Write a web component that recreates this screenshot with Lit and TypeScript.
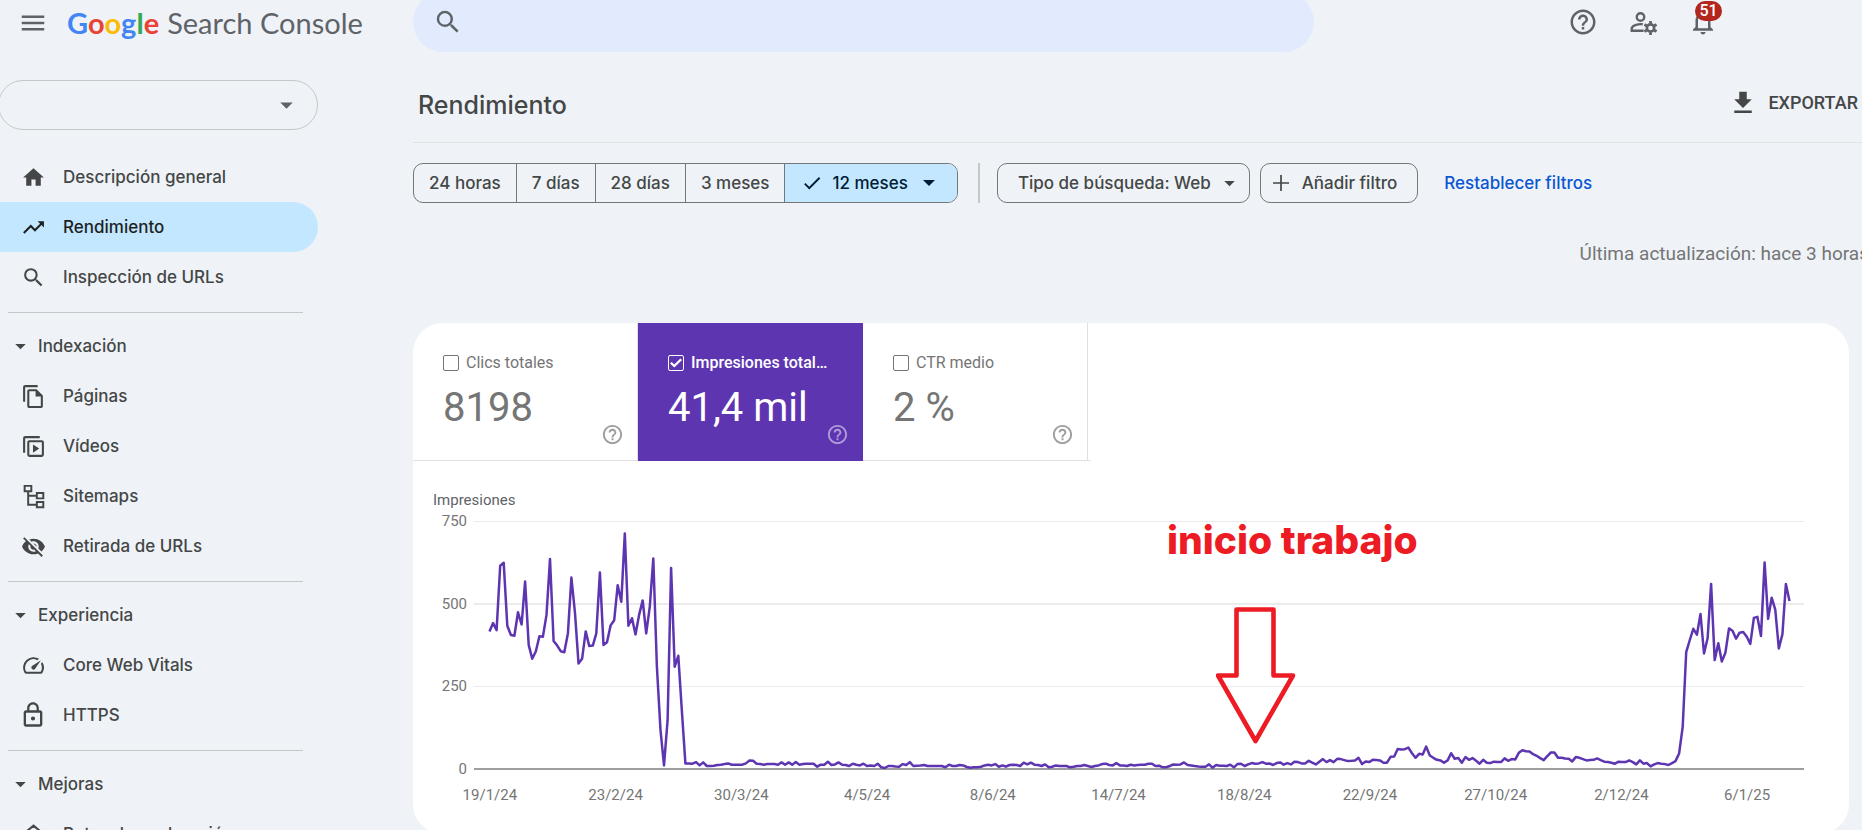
import { LitElement, html, svg, css, nothing } from "lit";
import { customElement, property, state } from "lit/decorators.js";
import { classMap } from "lit/directives/class-map.js";

const ICONS: Record<string, unknown> = {
  menu: svg`<path d="M3 18h18v-2H3v2zm0-5h18v-2H3v2zm0-7v2h18V6H3z"/>`,
  search: svg`<path d="M15.5 14h-.79l-.28-.27A6.471 6.471 0 0 0 16 9.5 6.5 6.5 0 1 0 9.5 16c1.61 0 3.09-.59 4.23-1.57l.27.28v.79l5 4.99L20.49 19l-4.99-5zm-6 0C7.01 14 5 11.99 5 9.5S7.01 5 9.5 5 14 7.01 14 9.5 11.99 14 9.5 14z"/>`,
  home: svg`<path d="M10 20v-6h4v6h5v-8h3L12 3 2 12h3v8z"/>`,
  trend: svg`<path d="M16 6l2.29 2.29-4.88 4.88-4-4L2 16.59 3.41 18l6-6 4 4 6.3-6.29L22 12V6z"/>`,
  pages: svg`<path d="M16 1H4c-1.1 0-2 .9-2 2v14h2V3h12V1zm-1 4H8c-1.1 0-1.99.9-1.99 2L6 21c0 1.1.89 2 1.99 2H19c1.1 0 2-.9 2-2V11l-6-6zM8 21V7h6v5h5v9H8z"/>`,
  videos: svg`<path d="M2 18V4a2 2 0 0 1 2-2h14v2H4v14z"/><path fill-rule="evenodd" d="M8 6h12a2 2 0 0 1 2 2v12a2 2 0 0 1-2 2H8a2 2 0 0 1-2-2V8a2 2 0 0 1 2-2zm0 2v12h12V8zM11.5 10v8l6-4z"/>`,
  sitemap: svg`<g fill="none" stroke="currentColor" stroke-width="1.9"><path d="M3.500 1.800h6.400v5.200H3.500zM15.200 8.600h6.200v5.200h-6.200zM15.200 17.200h6.200v5.200h-6.200zM6.900 7v13h8.300M6.900 11.200h8.300"/></g>`,
  hidden: svg`<path d="M12 7c2.760 0 5 2.240 5 5 0 .65-.13 1.260-.36 1.830l2.920 2.920c1.510-1.260 2.700-2.890 3.430-4.750-1.730-4.390-6-7.500-11-7.500-1.400 0-2.740.25-3.980.7l2.160 2.160C10.740 7.130 11.350 7 12 7zM2 4.270l2.280 2.280.46.46C3.080 8.300 1.780 10.020 1 12c1.730 4.390 6 7.500 11 7.500 1.550 0 3.030-.3 4.380-.84l.42.42L19.730 22 21 20.730 3.270 3 2 4.270zM7.530 9.800l1.550 1.550c-.05.21-.08.43-.08.65 0 1.660 1.340 3 3 3 .22 0 .44-.03.65-.08l1.550 1.550c-.67.33-1.410.53-2.200.53-2.760 0-5-2.240-5-5 0-.79.2-1.530.53-2.200zm4.310-.78l3.150 3.150.02-.16c0-1.660-1.340-3-3-3l-.17.01z"/>`,
  speed: svg`<path d="M20.380 8.570l-1.230 1.850a8 8 0 0 1-.22 7.580H5.070A8 8 0 0 1 15.580 6.850l1.850-1.230A10 10 0 0 0 3.350 19a2 2 0 0 0 1.720 1h13.850a2 2 0 0 0 1.740-1 10 10 0 0 0-.27-10.440zm-9.790 6.840a2 2 0 0 0 2.830 0l5.660-8.490-8.490 5.660a2 2 0 0 0 0 2.830z"/>`,
  lock: svg`<path d="M12 16.800a1.800 1.800 0 1 0 0-3.600 1.800 1.800 0 0 0 0 3.600zm6-8.800h-1V6c0-2.760-2.240-5-5-5S7 3.240 7 6v2H6c-1.100 0-2 .9-2 2v10c0 1.100.9 2 2 2h12c1.100 0 2-.9 2-2V10c0-1.100-.9-2-2-2zM8.900 6c0-1.710 1.390-3.100 3.100-3.100s3.100 1.390 3.100 3.100v2H8.900V6zM18 20H6V10h12v10z"/>`,
  trail: svg`<path fill="none" stroke="currentColor" stroke-width="2" d="M12 3.500l9 7.500-9 7.500-9-7.500z"/>`,
  help: svg`<path d="M11 18h2v-2h-2v2zm1-16C6.480 2 2 6.480 2 12s4.480 10 10 10 10-4.480 10-10S17.520 2 12 2zm0 18c-4.410 0-8-3.590-8-8s3.590-8 8-8 8 3.590 8 8-3.590 8-8 8zm0-14c-2.210 0-4 1.790-4 4h2c0-1.100.9-2 2-2s2 .9 2 2c0 2-3 1.750-3 5h2c0-2.250 3-2.500 3-5 0-2.210-1.790-4-4-4z"/>`,
  accounts: svg`<g fill="none" stroke="currentColor" stroke-width="1.900"><circle cx="10" cy="8" r="3"/><path d="M11.800 13.800c-3.400-.5-7.900.6-8.800 3V19h9.500"/><circle cx="18" cy="16.800" r="2.900" stroke-width="2.100"/><path stroke-width="2.200" d="M18 11.200v2M18 20.400v2M13.150 14l1.730 1M21.120 18.600l1.730 1M13.150 19.600l1.730-1M21.120 15l1.730-1"/></g>`,
  bell: svg`<path d="M12 22c1.100 0 2-.9 2-2h-4c0 1.100.9 2 2 2zm6-6v-5c0-3.070-1.630-5.640-4.500-6.320V4c0-.83-.67-1.500-1.500-1.500s-1.500.67-1.500 1.500v.68C7.640 5.360 6 7.920 6 11v5l-2 2v1h16v-1l-2-2zm-2 1H8v-6c0-2.480 1.510-4.500 4-4.500s4 2.020 4 4.500v6z"/>`,
  download: svg`<path d="M5 20h14v-2H5v2zM19 9h-4V3H9v6H5l7 7 7-7z"/>`,
  down: svg`<path d="M6 9l6 6 6-6z"/>`,
  check: svg`<path d="M9 16.170L4.830 12l-1.420 1.410L9 19 21 7l-1.410-1.410z"/>`,
  plus: svg`<path d="M20 12.850h-7.150V20h-1.700v-7.150H4v-1.700h7.150V4h1.700v7.150H20z"/>`,
};

const icon = (name: string, size: number) =>
  html`<svg class="icon" width=${size} height=${size} viewBox="0 0 24 24" fill="currentColor" aria-hidden="true">${ICONS[name]}</svg>`;

const base = css`
  * { box-sizing: border-box; }
  .icon { display: block; flex: none; }
  button, select, input { font: inherit; color: inherit; background: none; border: 0; margin: 0; padding: 0; }
  button { cursor: pointer; }
  a { color: inherit; text-decoration: none; }
`;

/* Daily impressions, 19/1/24 to 18/1/25. */
const IMPRESSIONS = [
  417, 442, 421, 616, 625, 434, 406, 404, 475, 438, 568, 376, 334, 356, 402, 401, 467, 636, 388, 374,
  357, 354, 411, 580, 472, 320, 334, 417, 373, 374, 411, 595, 376, 384, 435, 451, 557, 507, 714, 434,
  457, 408, 467, 511, 411, 492, 638, 310, 118, 11, 148, 609, 310, 343, 179, 17, 17, 16, 21, 11,
  20, 9, 9, 10, 12, 13, 15, 17, 13, 13, 13, 13, 17, 26, 25, 16, 15, 13, 15, 15,
  15, 13, 20, 13, 20, 13, 21, 13, 15, 16, 16, 16, 7, 13, 13, 22, 12, 14, 20, 13,
  12, 9, 16, 13, 11, 16, 9, 11, 9, 16, 5, 3, 9, 9, 8, 7, 15, 12, 21, 9,
  10, 11, 12, 9, 9, 9, 9, 9, 5, 13, 9, 9, 12, 11, 6, 4, 5, 5, 7, 11,
  13, 11, 15, 7, 11, 7, 12, 13, 12, 9, 19, 14, 19, 13, 12, 9, 14, 5, 7, 11,
  9, 9, 9, 5, 7, 9, 9, 12, 9, 6, 9, 11, 15, 16, 12, 11, 18, 11, 11, 9,
  13, 11, 12, 13, 13, 16, 16, 9, 10, 5, 5, 9, 14, 13, 14, 20, 12, 11, 9, 8,
  7, 7, 14, 4, 12, 10, 10, 9, 13, 5, 15, 16, 9, 14, 18, 16, 17, 21, 16, 17,
  12, 18, 20, 13, 18, 14, 22, 21, 17, 17, 25, 19, 14, 22, 30, 21, 27, 21, 31, 30,
  27, 24, 25, 26, 34, 15, 23, 21, 28, 27, 26, 19, 19, 37, 38, 61, 59, 60, 65, 48,
  34, 46, 44, 68, 41, 34, 28, 26, 19, 26, 48, 31, 33, 19, 36, 28, 33, 25, 16, 28,
  19, 18, 22, 21, 21, 32, 25, 30, 29, 49, 57, 54, 53, 45, 40, 33, 27, 39, 50, 50,
  34, 34, 32, 31, 23, 36, 34, 30, 26, 27, 28, 32, 27, 22, 21, 19, 16, 22, 21, 21,
  26, 21, 14, 26, 16, 18, 8, 14, 18, 16, 15, 12, 18, 24, 47, 128, 354, 391, 425, 407,
  470, 350, 396, 561, 330, 381, 326, 352, 426, 419, 395, 413, 415, 401, 379, 458, 461, 403, 626, 455,
  519, 482, 365, 408, 561, 509,
];

const DATES = ["19/1/24", "23/2/24", "30/3/24", "4/5/24", "8/6/24", "14/7/24", "18/8/24", "22/9/24", "27/10/24", "2/12/24", "6/1/25"];

@customElement("gsc-header")
class GscHeader extends LitElement {
  static styles = [base, css`
    :host { display: grid; grid-template-columns: 413px minmax(0, 1fr); height: 60px; color: #5f6368; }
    .brand { display: flex; align-items: center; padding: 0 0 14px 18px; }
    .logo { display: flex; align-items: baseline; gap: 8px; margin-left: 19px; white-space: nowrap; }
    .google { font: 700 29px/40px "Lato", sans-serif; }
    .product { font: 400 29px/40px "Lato", sans-serif; }
    .b { color: #4285f4; } .r { color: #ea4335; } .y { color: #fbbc04; } .g { color: #34a853; }
    .bar { display: flex; justify-content: space-between; align-items: flex-start; padding-right: 144px; }
    .search { display: flex; align-items: center; width: 901px; height: 60px; margin-top: -8px; padding: 0 20px; border-radius: 30px; background: #e2ebfd; }
    .search input { flex: 1; min-width: 0; margin-left: 12px; outline: none; font: 400 18px "Roboto", sans-serif; }
    .actions { display: flex; gap: 30px; padding-top: 7px; }
    .bell { position: relative; }
    .badge { position: absolute; left: 7px; top: -6px; width: 27px; height: 20px; border-radius: 10px; background: #b3261e; color: #fff; font: 500 16px/20px "Roboto", sans-serif; text-align: center; }
  `];
  render() {
    return html`
      <div class="brand">
        <button aria-label="Menú">${icon("menu", 30)}</button>
        <a class="logo" href="#">
          <span class="google"><span class="b">G</span><span class="r">o</span><span class="y">o</span><span class="b">g</span><span class="g">l</span><span class="r">e</span></span>
          <span class="product">Search Console</span>
        </a>
      </div>
      <div class="bar">
        <label class="search">${icon("search", 30)}<input type="search" aria-label="Buscar" /></label>
        <div class="actions">
          <button aria-label="Ayuda">${icon("help", 30)}</button>
          <button aria-label="Usuarios">${icon("accounts", 30)}</button>
          <button class="bell" aria-label="Notificaciones">${icon("bell", 30)}<span class="badge">51</span></button>
        </div>
      </div>`;
  }
}

type Entry = { icon: string; label: string; size?: number; active?: boolean };
const GROUPS: { title?: string; items: Entry[] }[] = [
  { items: [
    { icon: "home", label: "Descripción general" },
    { icon: "trend", label: "Rendimiento", active: true },
    { icon: "search", label: "Inspección de URLs" },
  ] },
  { title: "Indexación", items: [
    { icon: "pages", label: "Páginas" },
    { icon: "videos", label: "Vídeos" },
    { icon: "sitemap", label: "Sitemaps" },
    { icon: "hidden", label: "Retirada de URLs" },
  ] },
  { title: "Experiencia", items: [
    { icon: "speed", label: "Core Web Vitals" },
    { icon: "lock", label: "HTTPS", size: 28 },
  ] },
  { title: "Mejoras", items: [{ icon: "trail", label: "Rutas de exploración" }] },
];

@customElement("gsc-sidebar")
class GscSidebar extends LitElement {
  static styles = [base, css`
    :host { display: block; width: 318px; color: #444746; font: 500 17px/24px "Inter", sans-serif; }
    .property { display: flex; position: relative; margin: 20px 0 22px -2px; height: 50px; border: 1px solid #c4c7c5; border-radius: 25px; color: #5f6368; }
    .property select { flex: 1; appearance: none; padding: 0 24px; }
    .property .icon { position: absolute; right: 18px; top: 12px; pointer-events: none; }
    .item { display: flex; align-items: center; height: 50px; }
    .slot { display: flex; justify-content: center; width: 30px; margin: 0 15px 0 18px; }
    .active { background: #c2e7ff; color: #1f1f1f; border-radius: 0 25px 25px 0; }
    .group + .group { margin-top: 10px; }
    .rule { height: 1px; margin: 0 15px 8px 8px; background: #c4c7c5; }
    .title { display: flex; align-items: center; gap: 7px; height: 50px; padding-left: 10px; }
  `];
  render() {
    return html`
      <div class="property">
        <select aria-label="Propiedad"><option></option></select>${icon("down", 25)}
      </div>
      <nav>
        ${GROUPS.map((g) => html`
          <div class="group">
            ${g.title ? html`<div class="rule"></div><button class="title" aria-expanded="true">${icon("down", 21)}${g.title}</button>` : nothing}
            ${g.items.map((it) => html`
              <a href="#" class=${classMap({ item: true, active: !!it.active })}>
                <span class="slot">${icon(it.icon, it.size ?? 25)}</span>${it.label}
              </a>`)}
          </div>`)}
      </nav>`;
  }
}

@customElement("gsc-filters")
class GscFilters extends LitElement {
  @state() range = "12 meses";
  static styles = [base, css`
    :host { display: flex; align-items: center; color: #444746; font: 500 17px/24px "Inter", sans-serif; white-space: nowrap; }
    .ranges { display: flex; height: 40px; border: 1px solid #747775; border-radius: 10px; overflow: hidden; }
    .range { display: flex; align-items: center; padding: 0 15px; }
    .range + .range { border-left: 1px solid #747775; }
    .range[aria-pressed="true"] { gap: 9px; padding: 0 16px; background: #c2e7ff; color: #001d35; }
    .rule { width: 2px; height: 40px; margin: 0 17px 0 20px; background: #c4c7c5; }
    .chip { display: flex; align-items: center; height: 40px; border: 1px solid #747775; border-radius: 10px; }
    .type { gap: 8px; padding: 0 9px 0 20px; margin-right: 10px; }
    .add { gap: 9px; padding: 0 20px 0 8px; margin-right: 26px; }
    .reset { color: #0b57d0; }
  `];
  render() {
    return html`
      <div class="ranges" role="group" aria-label="Intervalo">
        ${["24 horas", "7 días", "28 días", "3 meses", "12 meses"].map((r) => {
          const on = r === this.range;
          return html`<button class="range" aria-pressed=${on} @click=${() => (this.range = r)}>
            ${on ? icon("check", 22) : nothing}${r}${on ? icon("down", 24) : nothing}</button>`;
        })}
      </div>
      <span class="rule"></span>
      <button class="chip type" aria-haspopup="true">Tipo de búsqueda: Web${icon("down", 21)}</button>
      <button class="chip add">${icon("plus", 24)}Añadir filtro</button>
      <a class="reset" href="#">Restablecer filtros</a>`;
  }
}

@customElement("gsc-metric")
class GscMetric extends LitElement {
  @property() label = "";
  @property() value = "";
  @property({ type: Boolean, reflect: true }) checked = false;
  static styles = [base, css`
    :host { display: block; position: relative; width: 225px; height: 138px; margin-bottom: -1px; padding: 29px 30px 0; border-right: 1px solid #e0e0e0; color: #757575; font-family: "Roboto", sans-serif; }
    :host([checked]) { background: #5e35b1; border-color: #5e35b1; color: #fff; }
    .head { display: flex; align-items: center; gap: 7px; height: 22px; font: 400 16px/22px "Roboto", sans-serif; }
    :host([checked]) .head { font-weight: 500; }
    .head input { appearance: none; flex: none; width: 16px; height: 16px; border: 1px solid #757575; border-radius: 2px; display: grid; place-items: center; }
    .head input:checked { border-color: #fff; }
    .head input:checked::after { content: ""; width: 12px; height: 10px; background: #fff; clip-path: polygon(0 55%, 14% 41%, 36% 64%, 86% 6%, 100% 20%, 36% 94%); }
    .text { overflow: hidden; text-overflow: ellipsis; white-space: nowrap; }
    .value { margin-top: 9px; font-size: 40px; line-height: 50px; }
    .help { position: absolute; right: 13px; bottom: 15px; opacity: .7; }
    :host([checked]) .help { opacity: .5; }
  `];
  render() {
    return html`
      <label class="head"><input type="checkbox" .checked=${this.checked} @change=${(e: Event) => (this.checked = (e.target as HTMLInputElement).checked)} /><span class="text">${this.label}</span></label>
      <div class="value">${this.value}</div>
      <button class="help" aria-label="Más información">${icon("help", 23)}</button>`;
  }
}

@customElement("gsc-chart")
class GscChart extends LitElement {
  static styles = [base, css`
    :host { display: block; padding: 29px 45px 0 14px; color: #757575; font: 400 15px/20px "Roboto", sans-serif; }
    .name { padding-left: 6px; color: #5f6368; height: 21px; }
    .body { display: grid; grid-template-columns: 40px minmax(0, 1fr); column-gap: 7px; }
    .scale { display: flex; flex-direction: column; justify-content: space-between; height: 268px; text-align: right; }
    .plot { position: relative; margin: 10px 0; height: 249px; }
    .lines { position: absolute; inset: 0; display: flex; flex-direction: column; justify-content: space-between; }
    .lines i { height: 1px; background: #ebebeb; }
    .lines i:nth-child(2) { height: 2px; }
    .lines i:last-child { height: 2px; background: #9e9e9e; }
    .series { position: absolute; inset: 0; width: 100%; height: 100%; overflow: visible; }
    .series polyline { fill: none; stroke: #5e35b1; stroke-linejoin: round; vector-effect: non-scaling-stroke; }
    .dates { display: grid; grid-template-columns: repeat(11, 1fr); margin: 5px -6px 0 0; text-align: center; }
    .note { position: absolute; left: 693px; top: -1px; color: #ed1c24; font: 800 39px/40px "Inter", sans-serif; white-space: nowrap; }
    .arrow { position: absolute; left: 742px; top: 86px; }
  `];
  render() {
    const step = 1300 / (IMPRESSIONS.length - 1);
    const points = IMPRESSIONS.map((v, i) => `${(15.5 + i * step).toFixed(1)},${(248 - v * 0.33).toFixed(1)}`).join(" ");
    return html`
      <div class="name">Impresiones</div>
      <div class="body">
        <div class="scale"><span>750</span><span>500</span><span>250</span><span>0</span></div>
        <div class="plot">
          <div class="lines"><i></i><i></i><i></i><i></i></div>
          <svg class="series" viewBox="0 0 1330 249" preserveAspectRatio="none" role="img" aria-label="Impresiones"><polyline points=${points} stroke-width="2.5" /></svg>
          <div class="note">inicio trabajo</div>
          <svg class="arrow" width="80" height="138" viewBox="0 0 80 138" fill="none" stroke="#ed1c24" stroke-width="4.600" stroke-linejoin="round"><path d="M20.500 2.500H57.500V68.500H77L39.500 134L2 68.500H20.500Z" /></svg>
        </div>
      </div>
      <div class="dates">${DATES.map((d) => html`<span>${d}</span>`)}</div>`;
  }
}

@customElement("app-root")
class AppRoot extends LitElement {
  static styles = [base, css`
    :host { display: block; height: 100vh; overflow: hidden; background: #eff3f8; font-family: "Roboto", sans-serif; }
    .page { display: grid; grid-template-columns: 413px minmax(0, 1fr); }
    .title { display: flex; align-items: center; justify-content: space-between; height: 83px; padding: 8px 4px 0 5px; border-bottom: 1px solid #e0e3e1; margin-bottom: 20px; color: #444746; }
    h1 { margin: 0; font: 500 25px/32px "Inter", sans-serif; }
    .export { display: flex; align-items: center; gap: 10px; padding-bottom: 4px; font: 500 18px/24px "Roboto", sans-serif; }
    .updated { display: flex; justify-content: flex-end; margin: 39px -7px 0 0; color: #757575; font: 400 19px/24px "Roboto", sans-serif; white-space: nowrap; }
    .card { margin: 57px 13px 0 0; min-height: 511px; border-radius: 30px; background: #fff; overflow: hidden; }
    .metrics { display: flex; width: fit-content; padding-right: 3px; border-bottom: 1px solid #e0e0e0; }
  `];
  render() {
    return html`
      <gsc-header></gsc-header>
      <div class="page">
        <gsc-sidebar></gsc-sidebar>
        <main>
          <div class="title"><h1>Rendimiento</h1><button class="export">${icon("download", 30)}EXPORTAR</button></div>
          <gsc-filters></gsc-filters>
          <div class="updated">Última actualización: hace 3 horas</div>
          <section class="card">
            <div class="metrics">
              <gsc-metric label="Clics totales" value="8198"></gsc-metric>
              <gsc-metric label="Impresiones totales" value="41,4 mil" checked></gsc-metric>
              <gsc-metric label="CTR medio" value="2 %"></gsc-metric>
            </div>
            <gsc-chart></gsc-chart>
          </section>
        </main>
      </div>`;
  }
}
